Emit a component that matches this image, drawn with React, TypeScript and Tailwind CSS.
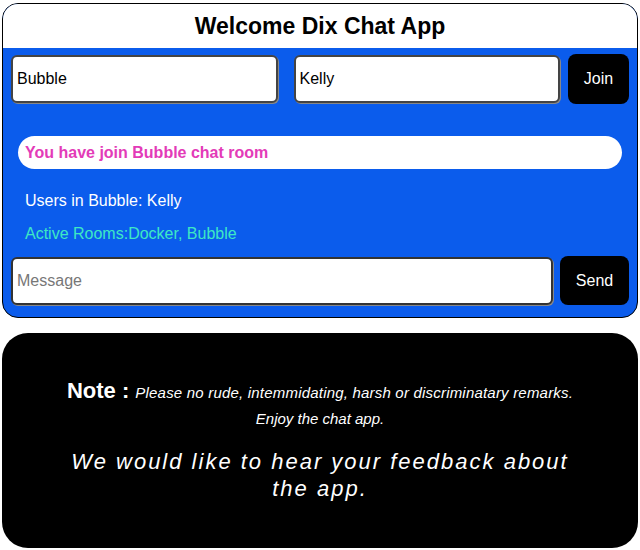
export default function App() {
  return (
    <div className="w-[640px] h-[550px] bg-white pt-[3px] px-[2px] font-['Liberation_Sans',Arial,sans-serif]">
      {/* Chat card */}
      <div className="h-[315px] border-[1.5px] border-black rounded-[16px] overflow-hidden bg-[#0b5cec] flex flex-col">
        <div className="h-[44px] bg-white flex items-center justify-center">
          <h1 className="text-[23px] font-bold text-black">Welcome Dix Chat App</h1>
        </div>
        <div className="flex items-center gap-[8px] pl-[8px] pr-[8px] mt-[6px]">
          <input
            defaultValue="Bubble"
            className="w-[267px] h-[48px] bg-white rounded-[6px] border-2 border-[#444] shadow-[1px_1px_0_#888] px-[4px] text-[16px] text-black outline-none"
          />
          <input
            defaultValue="Kelly"
            className="w-[267px] h-[48px] ml-[8px] bg-white rounded-[6px] border-2 border-[#444] shadow-[1px_1px_0_#888] px-[4px] text-[16px] text-black outline-none"
          />
          <button className="w-[61px] h-[50px] bg-black text-white rounded-[8px] text-[16px]">Join</button>
        </div>
        <div className="mt-[32px] ml-[15px] mr-[15px] h-[33px] bg-white rounded-full flex items-center px-[7px]">
          <span className="text-[16px] font-bold text-[#e33bb8]">You have join Bubble chat room</span>
        </div>
        <p className="mt-[22px] ml-[22px] text-[16px] text-white leading-[20px]">Users in Bubble: Kelly</p>
        <p className="mt-[13px] ml-[22px] text-[16px] text-[#3ee8c4] leading-[20px]">Active Rooms:Docker, Bubble</p>
        <div className="flex items-center gap-[7px] pl-[8px] pr-[8px] mt-[12px]">
          <input
            placeholder="Message"
            className="w-[543px] h-[48px] bg-white rounded-[6px] border-2 border-[#333] shadow-[1px_1px_0_#888] px-[4px] text-[16px] text-black placeholder:text-[#777] outline-none"
          />
          <button className="w-[69px] h-[49px] bg-black text-white rounded-[8px] text-[16px]">Send</button>
        </div>
      </div>

      {/* Note card */}
      <div className="mt-[15px] h-[215px] bg-black rounded-[26px] flex flex-col items-center pt-[46px] text-white">
        <p className="text-center leading-[24px]">
          <span className="text-[22px] font-bold">Note : </span>
          <span className="text-[15px] italic tracking-[0.2px]">Please no rude, intemmidating, harsh or discriminatary remarks.</span>
        </p>
        <p className="text-[15px] italic mt-[3px]">Enjoy the chat app.</p>
        <p className="mt-[17px] w-[520px] text-center text-[22px] italic tracking-[2px] leading-[27px]">
          We would like to hear your feedback about the app.
        </p>
      </div>
    </div>
  );
}
